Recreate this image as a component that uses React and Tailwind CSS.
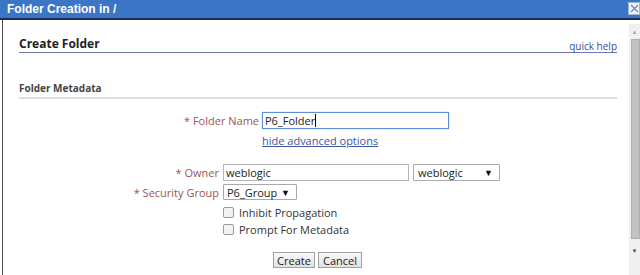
export default function App() {
  const label = "text-[11px] text-[#9c5450] text-right leading-none";
  return (
    <div className="w-[640px] h-[275px] overflow-hidden bg-white flex flex-col font-['Open_Sans',sans-serif]">
      <div className="h-[20px] shrink-0 bg-[#3b76c6] border-b-2 border-[#1b2f55] flex items-center justify-between pl-[7px]">
        <span className="font-['Liberation_Sans',Arial,sans-serif] font-bold text-[12px] text-white leading-none">
          Folder Creation in /
        </span>
        <button className="w-[12px] h-[13px] mb-[1px] bg-[#eef2fa] border border-[#9fb4d8] flex items-center justify-center">
          <svg width="9" height="9" viewBox="0 0 9 9">
            <path d="M1 1 L8 8 M8 1 L1 8" stroke="#6f86b3" strokeWidth="1.2" />
          </svg>
        </button>
      </div>

      <div className="flex flex-1 min-h-0">
        <div className="flex-1 ml-[2px] border-l border-[#4a4a4a] pl-[16px] pr-[12px]">
          <div className="mt-[16px] h-[17px] flex items-start justify-between border-b border-[#6a7aae]">
            <h2 className="text-[12px] font-bold text-[#222] leading-[16px]">Create Folder</h2>
            <a className="text-[10px] text-[#3b4d9c] leading-[16px] pt-[2px]">quick help</a>
          </div>

          <div className="mt-[28px] h-[18px] border-b-2 border-[#dedede]">
            <h3 className="text-[10px] font-bold text-[#444] leading-[15px]">Folder Metadata</h3>
          </div>

          <div className="mt-[13px] flex items-center h-[17px]">
            <span className={`w-[240px] ${label}`}>* Folder Name</span>
            <div className="ml-[3px] w-[187px] h-[17px] border border-[#5d8fd8] shadow-[0_0_1px_#8fb3e8] flex items-center pl-[2px]">
              <span className="text-[11px] text-[#222] leading-none">P6_Folder</span>
              <span className="w-[1px] h-[13px] bg-black" />
            </div>
          </div>

          <div className="h-[20px] flex items-center pl-[243px] mt-[1px]">
            <a className="text-[11px] text-[#3d55a0] underline leading-none">hide advanced options</a>
          </div>

          <div className="mt-[14px] flex items-center h-[17px]">
            <span className={`w-[200px] ${label}`}>* Owner</span>
            <div className="ml-[4px] w-[186px] h-[17px] border border-[#b5b5b5] flex items-center pl-[2px]">
              <span className="text-[11px] text-[#222] leading-none">weblogic</span>
            </div>
            <div className="ml-[4px] w-[87px] h-[17px] border border-[#a9a9a9] rounded-[1px] flex items-center justify-between pl-[4px] pr-[6px]">
              <span className="text-[11px] text-[#222] leading-none">weblogic</span>
              <span className="text-[9px] text-[#111] leading-none">▼</span>
            </div>
          </div>

          <div className="mt-[3px] flex items-center h-[16px]">
            <span className={`w-[200px] ${label}`}>* Security Group</span>
            <div className="ml-[4px] w-[74px] h-[16px] border border-[#a9a9a9] rounded-[1px] flex items-center justify-between pl-[3px] pr-[6px]">
              <span className="text-[11px] text-[#222] leading-none">P6_Group</span>
              <span className="text-[9px] text-[#111] leading-none">▼</span>
            </div>
          </div>

          <div className="mt-[4px] flex items-center h-[16px] pl-[204px]">
            <span className="w-[11px] h-[11px] border border-[#9a9a9a] rounded-[2px] bg-[#f2f2f2]" />
            <span className="ml-[5px] text-[11px] text-[#333] leading-none">Inhibit Propagation</span>
          </div>
          <div className="mt-[1px] flex items-center h-[16px] pl-[204px]">
            <span className="w-[11px] h-[11px] border border-[#9a9a9a] rounded-[2px] bg-[#f2f2f2]" />
            <span className="ml-[5px] text-[11px] text-[#333] leading-none">Prompt For Metadata</span>
          </div>

          <div className="mt-[15px] flex items-center h-[16px] pl-[254px] gap-[3px]">
            <button className="w-[42px] h-[16px] border border-[#a0a0a0] bg-gradient-to-b from-[#f8f8f8] to-[#e2e2e2] text-[11px] text-[#222] leading-none">
              Create
            </button>
            <button className="w-[44px] h-[16px] border border-[#a0a0a0] bg-gradient-to-b from-[#f8f8f8] to-[#e2e2e2] text-[11px] text-[#222] leading-none">
              Cancel
            </button>
          </div>
        </div>

        <div className="w-[11px] mt-[4px] bg-[#f0f0f0] flex flex-col items-end">
          <div className="w-full h-[15px] flex items-center justify-center">
            <span className="text-[6px] text-[#a8a8a8] leading-none">▲</span>
          </div>
          <div className="w-[9px] h-[200px] bg-[#c2c2c2] border border-[#b0b0b0]" />
          <div className="w-full h-[24px] flex items-end justify-center pb-[9px]">
            <span className="text-[6px] text-[#505050] leading-none">▼</span>
          </div>
        </div>
      </div>
    </div>
  );
}
